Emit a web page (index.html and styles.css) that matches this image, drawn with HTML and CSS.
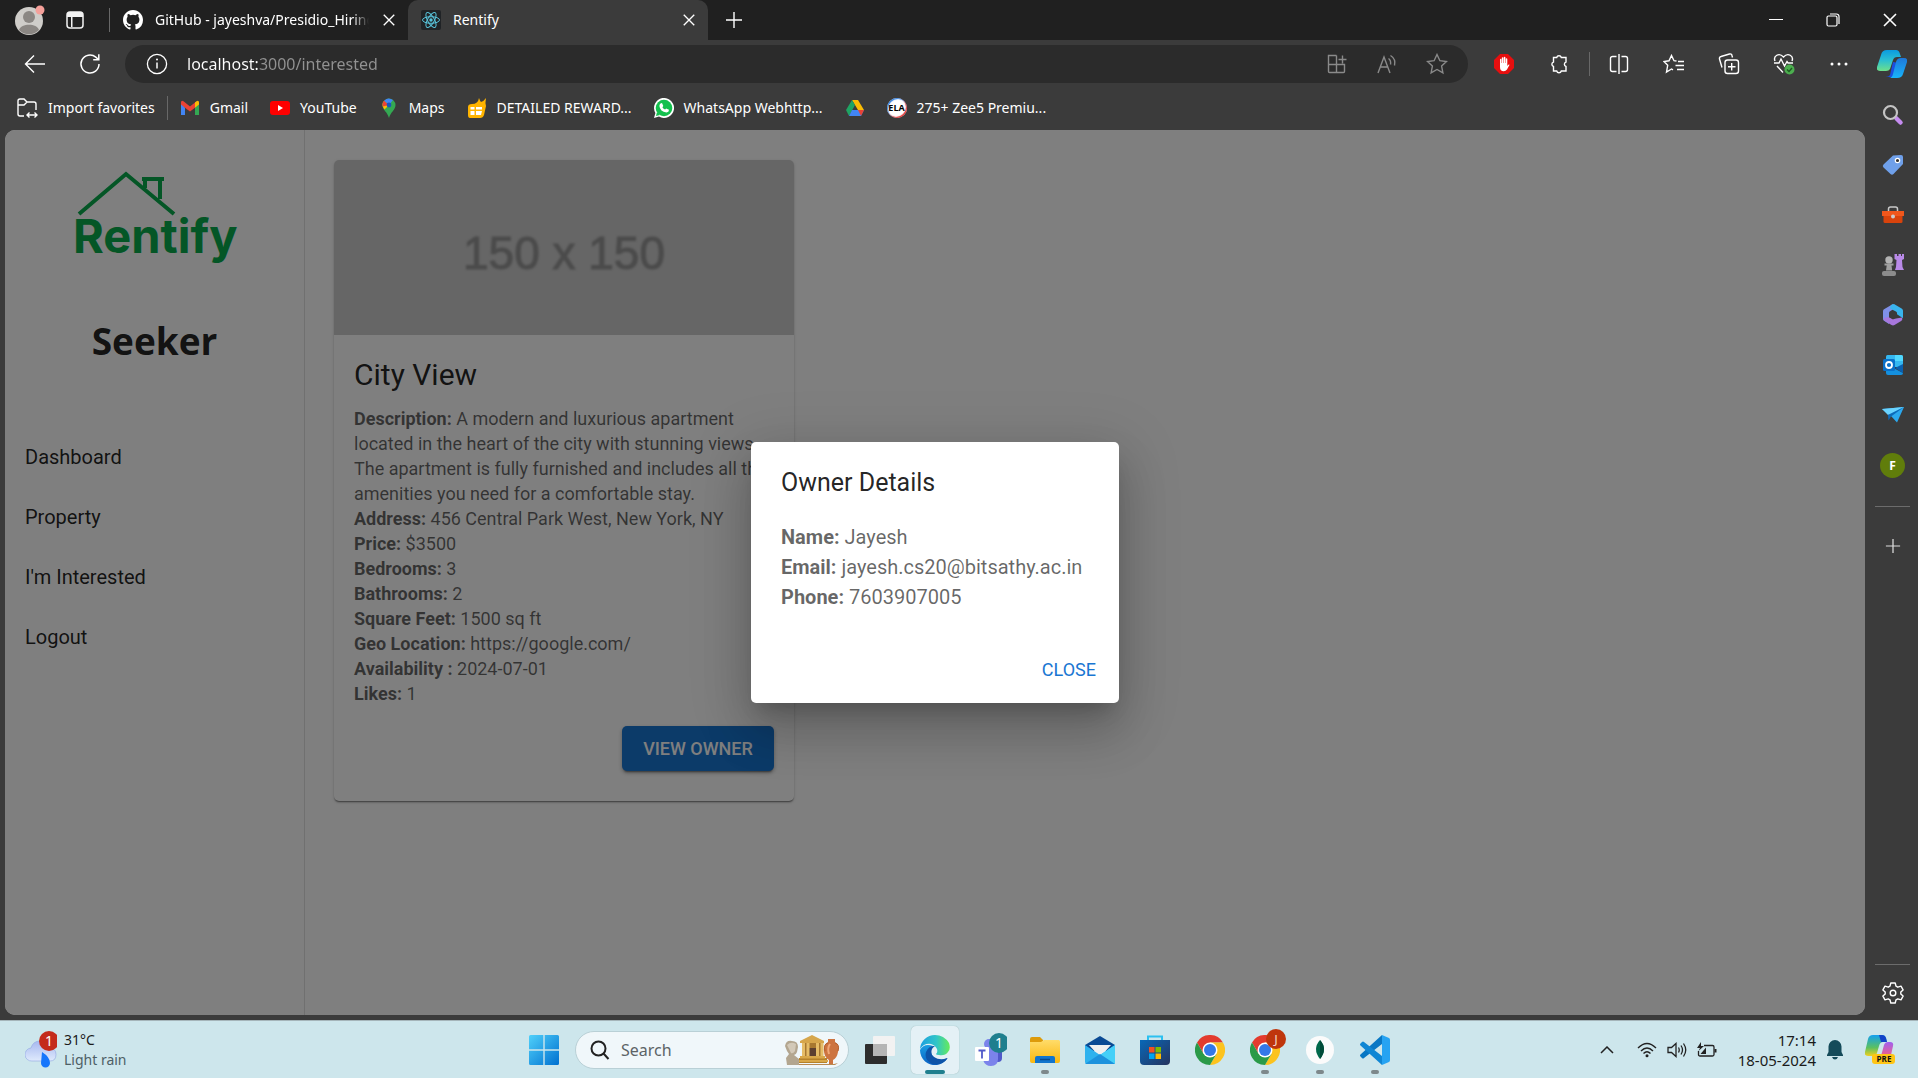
FILE: index.html
```html
<!DOCTYPE html>
<html lang="en">
<head>
<meta charset="utf-8">
<title>Rentify</title>
<link rel="stylesheet" href="styles.css">
</head>
<body>
<svg class="defs" width="0" height="0" aria-hidden="true">
  <defs>
    <linearGradient id="gWin" x1="0" y1="0" x2="1" y2="1"><stop offset="0" stop-color="#4fd0fa"/><stop offset="1" stop-color="#0070d0"/></linearGradient>
    <linearGradient id="gCopA" x1="0" y1="0" x2="0" y2="1"><stop offset="0" stop-color="#0a9be0"/><stop offset=".5" stop-color="#2cc0d0"/><stop offset="1" stop-color="#6ee08a"/></linearGradient>
    <linearGradient id="gCopB" x1="0" y1="0" x2="0" y2="1"><stop offset="0" stop-color="#1f78d8"/><stop offset="1" stop-color="#18b4fb"/></linearGradient>
    <linearGradient id="gEdgeA" x1="0" y1="0" x2="1" y2="0"><stop offset="0" stop-color="#1c9fe0"/><stop offset=".55" stop-color="#30c5c8"/><stop offset="1" stop-color="#66eb5a"/></linearGradient>
    <linearGradient id="gEdgeB" x1="0" y1="0" x2="0" y2="1"><stop offset="0" stop-color="#1b9de2"/><stop offset="1" stop-color="#0a62c4"/></linearGradient>
    <linearGradient id="gFolder" x1="0" y1="0" x2="0" y2="1"><stop offset="0" stop-color="#ffdc6a"/><stop offset="1" stop-color="#fbb80f"/></linearGradient>
    <linearGradient id="gCloud" x1="0" y1="0" x2="0" y2="1"><stop offset="0" stop-color="#a6b8f0"/><stop offset="1" stop-color="#dfeafc"/></linearGradient>
    <linearGradient id="gStore" x1="0" y1="0" x2="1" y2="1"><stop offset="0" stop-color="#0868b8"/><stop offset="1" stop-color="#26345f"/></linearGradient>
    <linearGradient id="gPreA" x1="0" y1="0" x2="0" y2="1"><stop offset="0" stop-color="#12a0f0"/><stop offset=".6" stop-color="#5cc060"/><stop offset="1" stop-color="#f0d020"/></linearGradient>
    <linearGradient id="gPreB" x1="0" y1="0" x2="0" y2="1"><stop offset="0" stop-color="#a060f0"/><stop offset="1" stop-color="#f0608a"/></linearGradient>
    <symbol id="x" viewBox="0 0 12 12"><path d="M1.500 1.500l9 9M10.500 1.500l-9 9" fill="none" stroke="currentColor" stroke-width="1.200"/></symbol>
    <symbol id="plus" viewBox="0 0 18 18"><path d="M9 1v16M1 9h16" fill="none" stroke="currentColor" stroke-width="1.400"/></symbol>
    <symbol id="chrome" viewBox="0 0 30 30">
      <path d="M2 7.500A15 15 0 0 1 28 7.500L15 7.500 8.500 18.750z" fill="#e33b2e"/>
      <path d="M28 7.500A15 15 0 0 1 15 30L21.500 18.750 15 7.500z" fill="#fcc31e"/>
      <path d="M15 30A15 15 0 0 1 2 7.500L8.500 18.750 21.500 18.750z" fill="#2a9a48"/>
      <circle cx="15" cy="15" r="7.500" fill="#fff"/><circle cx="15" cy="15" r="6" fill="#3478e8"/>
    </symbol>
  </defs>
</svg>

<header class="browser">
  <div class="tabs">
    <button class="slot profile" aria-label="Profile">
      <svg width="32" height="30" viewBox="0 0 32 30"><circle cx="15" cy="16" r="14" fill="#cfcdc9"/><circle cx="15" cy="12" r="6" fill="#8b8783"/><path d="M5 25c2-7 18-7 20 0a14 14 0 0 1-20 0z" fill="#8b8783"/><circle cx="26" cy="5" r="4.500" fill="#f5a09a"/></svg>
    </button>
    <button class="slot workspaces" aria-label="Tab actions">
      <svg width="18" height="18" viewBox="0 0 18 18"><rect x="1" y="1" width="16" height="16" rx="3" fill="none" stroke="#f2f2f2" stroke-width="1.500"/><path d="M1 4a3 3 0 0 1 3-3h10a3 3 0 0 1 3 3v2H1zM5 5h1.500v11H5z" fill="#f2f2f2"/></svg>
    </button>
    <span class="vline"></span>
    <div class="tab">
      <svg width="20" height="20" viewBox="0 0 16 16"><path fill="#fff" d="M8 0C3.580 0 0 3.580 0 8c0 3.540 2.290 6.530 5.470 7.590.4.070.55-.17.55-.38 0-.19-.01-.82-.01-1.490-2.010.37-2.530-.49-2.690-.94-.09-.23-.48-.94-.82-1.130-.28-.15-.68-.52-.01-.53.63-.01 1.080.58 1.230.82.72 1.210 1.870.87 2.330.66.070-.52.28-.87.51-1.070-1.780-.2-3.640-.89-3.640-3.950 0-.87.31-1.590.82-2.150-.08-.2-.36-1.020.080-2.120 0 0 .67-.21 2.200.82a7.600 7.600 0 0 1 4 0c1.530-1.040 2.200-.82 2.200-.82.44 1.100.16 1.920.080 2.120.51.56.82 1.270.82 2.150 0 3.070-1.870 3.750-3.650 3.950.29.25.54.73.54 1.480 0 1.070-.01 1.930-.01 2.200 0 .21.15.46.55.38A8 8 0 0 0 16 8c0-4.420-3.580-8-8-8z"/></svg>
      <span class="tab-title fade">GitHub - jayeshva/Presidio_Hiring</span>
      <button class="close" aria-label="Close tab"><svg width="14" height="14"><use href="#x"/></svg></button>
    </div>
    <div class="tab active">
      <svg width="20" height="20" viewBox="0 0 20 20"><rect width="20" height="20" rx="2" fill="#202326"/><g fill="none" stroke="#58c4dc"><ellipse cx="10" cy="10" rx="8.500" ry="3.300"/><ellipse cx="10" cy="10" rx="8.500" ry="3.300" transform="rotate(60 10 10)"/><ellipse cx="10" cy="10" rx="8.500" ry="3.300" transform="rotate(120 10 10)"/></g><circle cx="10" cy="10" r="1.700" fill="#58c4dc"/></svg>
      <span class="tab-title">Rentify</span>
      <button class="close" aria-label="Close tab"><svg width="14" height="14"><use href="#x"/></svg></button>
    </div>
    <button class="slot newtab" aria-label="New tab"><svg width="18" height="18"><use href="#plus"/></svg></button>
    <div class="window-controls">
      <button aria-label="Minimize"><svg width="14" height="14" viewBox="0 0 14 14"><path d="M0 6.500h14" stroke="#fff"/></svg></button>
      <button aria-label="Restore"><svg width="14" height="14" viewBox="0 0 14 14" fill="none" stroke="#fff" stroke-width="1.200"><rect x="1" y="3" width="10" height="10" rx="1.500"/><path d="M4 1h6.500A2.500 2.500 0 0 1 13 3.500V11"/></svg></button>
      <button aria-label="Close window"><svg width="16" height="16"><use href="#x"/></svg></button>
    </div>
  </div>

  <div class="toolbar">
    <button class="slot" aria-label="Back"><svg width="22" height="20" viewBox="0 0 22 20" fill="none" stroke="#fff" stroke-width="1.400"><path d="M21 10H1.500M10 1.500L1.500 10l8.500 8.500"/></svg></button>
    <button class="slot reload" aria-label="Refresh"><svg width="22" height="22" viewBox="0 0 22 22" fill="none" stroke="#fff" stroke-width="1.500"><path d="M20 11a9 9 0 1 1-3.200-6.900L19.500 6.500M19.800 1.200v5.600h-5.600"/></svg></button>
    <div class="address">
      <svg width="22" height="22" viewBox="0 0 22 22"><circle cx="11" cy="11" r="9.600" fill="none" stroke="#fff" stroke-width="1.300"/><path d="M11 9.500v6" stroke="#fff" stroke-width="1.500"/><circle cx="11" cy="6.500" r="1" fill="#fff"/></svg>
      <input class="url" type="text" aria-label="Address" value="localhost:3000/interested">
      <button class="page-action" aria-label="Apps"><svg width="20" height="20" viewBox="0 0 20 20"><path d="M9.500 1.500h-8v16a1 1 0 0 0 1 1h14a1 1 0 0 0 1-1v-7h-16M9.500 1.500v17M11.500 5.500h8M15.500 1.500v8"/></svg></button>
      <button class="page-action" aria-label="Read aloud"><svg width="20" height="20" viewBox="0 0 20 20"><path d="M1 19L7 3l6 16M3.500 13h7M11.500 4.500c2 1.500 2.500 3.500 2 6M13.500 1.500c4 2.500 5 6 4 10"/></svg></button>
      <button class="page-action" aria-label="Add to favorites"><svg width="22" height="22" viewBox="0 0 22 22"><path d="M11 1.500l2.900 6.200 6.600.8-4.900 4.600 1.300 6.700L11 16.500l-5.900 3.300 1.300-6.700L1.500 8.500l6.600-.8z"/></svg></button>
    </div>
    <button class="tool" aria-label="Ad blocker"><svg width="20" height="20" viewBox="0 0 20 20"><path d="M6 0h8l6 6v8l-6 6H6l-6-6V6z" fill="#e60f0f"/><path d="M6 9V5.500q0-.8.700-.8t.7.800V9h.4V4q0-.8.800-.8t.8.800v5h.4V3.500q0-.8.800-.8t.8.800V9h.4V5q0-.8.700-.8t.8.800v7l1-1.200q.7-.6 1.300 0L13 15.500q-1.300 1.800-3.200 1.800Q6 17.300 6 13z" fill="#fff"/></svg></button>
    <button class="tool" aria-label="Extensions"><svg class="line" width="20" height="20" viewBox="0 0 20 20"><path d="M4.500 3.500h3.200a2.400 2.400 0 0 1 4.600 0H17v4.600a2.300 2.300 0 0 0 0 4.400V17h-4.700a2.400 2.400 0 0 1-4.600 0H4.500v-4.500a2.300 2.300 0 0 1 0-4.400z"/></svg></button>
    <span class="vline"></span>
    <button class="tool" aria-label="Split screen"><svg class="line" width="20" height="20" viewBox="0 0 20 20"><path d="M7.500 2.500h-4a2 2 0 0 0-2 2v11a2 2 0 0 0 2 2h4M12.500 2.500h4a2 2 0 0 1 2 2v11a2 2 0 0 1-2 2h-4M10 0v20"/></svg></button>
    <button class="tool" aria-label="Favorites"><svg class="line" width="22" height="20" viewBox="0 0 22 20"><path d="M13.500 7l-2.500-.3L8.500 1.500 6 6.800l-5 .8 3.700 3.700L3.500 18l5-3 1.500.8M15 7.500h6M12.500 11.500H21M14 15.500h7"/></svg></button>
    <button class="tool" aria-label="Collections"><svg class="line" width="22" height="22" viewBox="0 0 22 22"><path d="M4 14.500L1.500 6A2 2 0 0 1 3 3.500L11.500 1A2 2 0 0 1 14 2.500l.5 2"/><rect x="7" y="7" width="13.500" height="13.500" rx="2.500"/><path d="M13.700 10v7.500M10 13.700h7.500"/></svg></button>
    <button class="tool" aria-label="Browser essentials"><svg class="line" width="22" height="22" viewBox="0 0 22 22"><path d="M2 8C0 3 6-1 10.500 4 15-1 21 3 19 8M1 10h5l2-4 3.500 7L14 8.500l1 1.500h5M4 13l6 6.500"/><circle cx="16.500" cy="16.500" r="5" fill="#4cae4f" stroke="none"/><path d="M14 16.500l2 2 3-3.500" stroke="#1d5c20"/></svg></button>
    <button class="tool" aria-label="Settings and more"><svg width="18" height="6" viewBox="0 0 18 6" fill="#fff"><circle cx="2" cy="3" r="1.500"/><circle cx="9" cy="3" r="1.500"/><circle cx="16" cy="3" r="1.500"/></svg></button>
    <button class="copilot" aria-label="Copilot"><svg width="30" height="28" viewBox="0 0 30 28"><path d="M8 26q3 2 5-1l3-13 6 1-3 12q-1 2-3 2H10z" fill="#1a4fe0"/><path d="M10 0h9q3 0 4 4l1 3h-4q-3 0-4 3l-3 9q-1 2-4 2H3q-4 0-3-4L4 5q1-5 6-5z" fill="url(#gCopA)"/><path d="M20 28h-8q3 0 4-4l3-12q1-4 5-4h3q4 0 3 4l-4 12q-1 4-6 4z" fill="url(#gCopB)"/></svg></button>
  </div>

  <nav class="bookmarks" aria-label="Favorites bar">
    <a href="#"><svg class="line" width="22" height="22" viewBox="0 0 22 22"><path d="M8 19H4a2 2 0 0 1-2-2V4a2 2 0 0 1 2-2h4l3 3h7a2 2 0 0 1 2 2v6M2 8h6l3-3M11 18h10M13.500 15.500L11 18l2.500 2.500M18.500 15.500L21 18l-2.500 2.500"/></svg>Import favorites</a>
    <span class="vline"></span>
    <a href="#"><svg width="20" height="20" viewBox="0 0 20 20"><path d="M1 4.500V17h4V9.500z" fill="#4285f4"/><path d="M19 4.500V17h-4V9.500z" fill="#34a853"/><path d="M1 4.500Q1 2 3.500 3.200L10 8.500l6.500-5.300L15 9.800 10 13.500 5 9.800 1 6.500z" fill="#ea4335"/><path d="M15 4.400l1.500-1.200Q19 2 19 4.500v2l-4 3.300z" fill="#fbbc04"/></svg>Gmail</a>
    <a href="#"><svg width="20" height="20" viewBox="0 0 20 20"><rect y="3" width="20" height="14" rx="3" fill="#f00"/><path d="M8 7l5 3-5 3z" fill="#fff"/></svg>YouTube</a>
    <a href="#"><svg width="20" height="20" viewBox="0 0 20 20"><path d="M3.500 7a6.500 6.500 0 0 1 13 0c0 5-5 7-6.500 13C8.500 14 3.500 12 3.500 7z" fill="#34a853"/><path d="M10 7L5.500 11.500Q3.500 9 3.500 7 3.500 4 5.200 2.700z" fill="#fbbc04"/><path d="M10 7L3.700 8.500Q3 4.500 5.200 2.700z" fill="#ea4335"/><path d="M10 7L5.200 2.700Q9-1.500 14 2z" fill="#4285f4"/><circle cx="10" cy="7" r="2.400" fill="#1a56b8"/></svg>Maps</a>
    <a href="#"><svg width="20" height="20" viewBox="0 0 20 20"><path d="M1 9q0-3 4-3 6 0 7-6 1 3 2 4 3-1 5-4-1 5 0 8l-2 9q-1 3-4 3H3q-2 0-2-3z" fill="#ffb400"/><path d="M3.500 9h4v2.500h-4zM9 9h6v2.500H9zM3.500 13h4v4h-4zM9 13h6l-1 4H9z" fill="#fff"/></svg>DETAILED REWARD...</a>
    <a href="#"><svg width="20" height="20" viewBox="0 0 20 20"><path d="M0 20l1.400-5A10 10 0 1 1 5 18.600z" fill="#fff"/><circle cx="10" cy="10" r="8.300" fill="#13c04d"/><path d="M2 18l1-4 3 3z" fill="#13c04d"/><path d="M6.500 5.500l1.500-.5 1.300 3-.9 1.200q1 1.800 2.700 2.400l1-1.200 2.900 1.400q0 2.500-2.500 2.700Q6 13.500 5.400 8 5.500 6.300 6.500 5.500z" fill="#fff"/></svg>WhatsApp Webhttp...</a>
    <a href="#" aria-label="Drive"><svg width="20" height="20" viewBox="0 0 20 20"><path d="M7 2h6l6 10h-6z" fill="#fbbc04"/><path d="M7 2l3 5-6 11-3-6z" fill="#1fa463"/><path d="M7 12h12l-3 6H4z" fill="#4285f4"/><path d="M16 12h3l-3 6-3-6z" fill="#ea4335"/></svg></a>
    <a href="#"><span class="ela">ELA</span>275+ Zee5 Premiu...</a>
  </nav>
</header>

<div class="workspace">
  <div class="page">
    <aside class="drawer">
      <svg class="logo" width="170" height="104" viewBox="0 0 170 104"><g fill="none" stroke="#08ac4c" stroke-width="4"><path d="M6 48L53 8l48 40M72 22V12M87 33V12"/><path d="M69 13h22" stroke-width="4"/></g><text x="0" y="87" font-family="Inter, sans-serif" font-weight="700" font-size="47" fill="#08ac4c">Rentify</text></svg>
      <h1>Seeker</h1>
      <nav class="menu">
        <a href="#">Dashboard</a>
        <a href="#">Property</a>
        <a href="#">I'm Interested</a>
        <a href="#">Logout</a>
      </nav>
    </aside>
    <main>
      <article class="card">
        <div class="thumb"><span>150 x 150</span></div>
        <div class="card-body">
          <h2>City View</h2>
          <p><b>Description:</b> A modern and luxurious apartment located in the heart of the city with stunning views. The apartment is fully furnished and includes all the amenities you need for a comfortable stay.</p>
          <p><b>Address:</b> 456 Central Park West, New York, NY</p>
          <p><b>Price:</b> $3500</p>
          <p><b>Bedrooms:</b> 3</p>
          <p><b>Bathrooms:</b> 2</p>
          <p><b>Square Feet:</b> 1500 sq ft</p>
          <p><b>Geo Location:</b> https://google.com/</p>
          <p><b>Availability :</b> 2024-07-01</p>
          <p><b>Likes:</b> 1</p>
          <button class="view-owner">VIEW OWNER</button>
        </div>
      </article>
    </main>
    <div class="backdrop">
      <section class="dialog" role="dialog" aria-labelledby="owner-title">
        <h2 id="owner-title">Owner Details</h2>
        <div class="dialog-body">
          <p><b>Name:</b> Jayesh</p>
          <p><b>Email:</b> jayesh.cs20@bitsathy.ac.in</p>
          <p><b>Phone:</b> 7603907005</p>
        </div>
        <div class="dialog-actions"><button>CLOSE</button></div>
      </section>
    </div>
  </div>

  <aside class="edgebar">
    <button aria-label="Search"><svg width="22" height="22" viewBox="0 0 22 22"><path d="M14.500 14.500l4 4" stroke="#c58cf0" stroke-width="4.500" stroke-linecap="round"/><circle cx="8.500" cy="8.500" r="6.500" fill="none" stroke="#c4c4c4" stroke-width="2.200"/></svg></button>
    <button aria-label="Shopping"><svg width="22" height="22" viewBox="0 0 22 22"><path d="M11 1.500L19 1q2 0 2 2v7L11.500 20q-1.500 1.500-3 0L1.500 13.500q-1.500-1.500 0-3z" fill="#6fa0ea"/><circle cx="15.500" cy="6.500" r="2.200" fill="#333" stroke="#fff" stroke-width="1.200"/></svg></button>
    <button aria-label="Tools"><svg width="22" height="18" viewBox="0 0 22 18"><path d="M6.500 5V3q0-2 2-2h5q2 0 2 2v2" fill="none" stroke="#c8c8c8" stroke-width="1.500"/><path d="M0 5h22v5H0z" fill="#f0571c"/><path d="M1.500 10h19v5.500q0 1.500-1.500 1.500H3q-1.500 0-1.500-1.500z" fill="#d8430c"/><circle cx="11" cy="10.500" r="2" fill="#ccc"/></svg></button>
    <button aria-label="Games"><svg width="22" height="22" viewBox="0 0 22 22"><path d="M12.500 0H15v2h1.500V0H19v2h1V0h2v5l-2 1 .5 7 1.500 3h-9l1-3 .5-7-2-1z" fill="#b98ae8"/><circle cx="7" cy="6" r="3.700" fill="#b4b4b4"/><path d="M2.500 9.500h9v2h-2l.7 5H4l.7-5H2.500z" fill="#a0a0a0"/><rect y="17" width="14" height="5" rx="2" fill="#8c8c8c"/></svg></button>
    <button aria-label="Microsoft 365"><svg width="22" height="22" viewBox="0 0 22 22"><path d="M11 0L2 5.200q-1 .6-1 2v7.600q0 1.500 1 2L7 20V9q0-1.500 1.500-2L14 3.500z" fill="#7f90e8"/><path d="M9 1l3-1 8 4.700q1 .8 1 2v7.500l-6-4V9q0-1-1-1.600L8 4.500z" fill="#39b5ee"/><path d="M7 13l4 2 9-1.500q1 2-.5 3.200L12.500 21q-1.500.8-3 0L3 17q-2-1-1-3z" fill="#a777dc"/><path d="M11 7l4 2.300v4L11 15.500l-4-2.200v-4z" fill="#3b3b3b"/></svg></button>
    <button aria-label="Outlook"><svg width="22" height="20" viewBox="0 0 22 20"><path d="M4 1.500Q4 0 5.500 0H19q2 0 2 2v10H4z" fill="#35b8f1"/><path d="M13 0h6q2 0 2 2v4h-8z" fill="#50d9ff"/><path d="M4 9l17 9q0 2-2 2H6q-2 0-2-2z" fill="#1490df"/><path d="M21 9v9L13 13z" fill="#0a5fae"/><rect x="1" y="4" width="12" height="12" rx="1.500" fill="#0a70c8"/><circle cx="7" cy="10" r="3" fill="none" stroke="#fff" stroke-width="1.800"/></svg></button>
    <button aria-label="Drop"><svg width="22" height="16" viewBox="0 0 22 16"><path d="M0 2L22 0 15 15.500 9.500 9.500z" fill="#2ba8ee"/><path d="M0 2L22 0 6 8z" fill="#69d3ff"/><path d="M6 8L22 0 9 9.500 6.500 13.500z" fill="#0d69b8"/></svg></button>
    <button class="contact" aria-label="F contact">F</button>
    <span class="hline"></span>
    <button aria-label="Customize"><svg width="16" height="16"><use href="#plus"/></svg></button>
    <span class="hline last"></span>
    <button class="gear" aria-label="Settings"><svg class="line" width="22" height="22" viewBox="0 0 22 22"><path d="M8.800 1h4.400l.8 3.200 1.800 1 3.200-1 2.100 3.700L18.800 10v2l2.300 2.100L19 17.800l-3.200-.9-1.800 1-.8 3.100H8.800L8 17.900l-1.800-1-3.200.9-2.100-3.700L3.200 12v-2L.9 7.900 3 4.200l3.200 1 1.800-1z" stroke-linejoin="round"/><circle cx="11" cy="11" r="2.800"/></svg></button>
  </aside>
</div>

<footer class="taskbar">
  <button class="weather">
    <svg width="32" height="38" viewBox="0 0 32 38"><path d="M7 30a6.500 6.500 0 0 1-1-13Q8 10 15 10t9 7q7 0 7 6.500T25 30z" fill="url(#gCloud)" stroke="#91a6e2" stroke-width=".6"/><path d="M17 21q8 5 8 11a4.500 4.500 0 0 1-9 0z" fill="#1676fb"/><circle cx="24" cy="10" r="10" fill="#c42b1c"/><text x="24" y="15" text-anchor="middle" font-family="Noto Sans, sans-serif" font-size="14" fill="#fff">1</text></svg>
    <span><span class="temp">31°C</span><span class="cond">Light rain</span></span>
  </button>

  <div class="apps">
    <button class="app" aria-label="Start"><svg width="30" height="30" viewBox="0 0 30 30" fill="url(#gWin)"><path d="M0 1.500Q0 0 1.500 0H14.300v14.300H0zM15.700 0H28.500Q30 0 30 1.500v12.800H15.700zM0 15.700h14.300V30H1.500Q0 30 0 28.500zM15.700 15.700H30v12.800q0 1.500-1.500 1.500H15.700z"/></svg></button>
    <label class="search">
      <svg width="20" height="20" viewBox="0 0 20 20" fill="none" stroke="#222" stroke-width="2"><circle cx="8.500" cy="8.500" r="7"/><path d="M13.500 13.500l5 5.500"/></svg>
      <input type="text" placeholder="Search" aria-label="Search">
      <svg width="56" height="32" viewBox="0 0 56 32"><path d="M4 30h46l4-1-3 2H12z" fill="#b98a52"/><path d="M15 24h28v5H15z" fill="#b5822b"/><path d="M18 9h21v15H18z" fill="#a87830"/><path d="M25 14h7v9h-7z" fill="#5d4030"/><path d="M16 7L28 1l12 6v2H16z" fill="#d6a64c"/><path d="M18 9h3v13h-3zM22.500 9h3v13h-3zM32 9h3v13h-3zM36.500 9h3v13h-3z" fill="#e6bd68"/><path d="M16 22h25v2.500H16zM14 26h30v2H14z" fill="#d9a84a"/><path d="M1 12Q2 6 8 7q6 0 6 6l-1 5q-1 3-3 3l5 4v6H3l-1-7 3-4-2-3z" fill="#b3a690"/><path d="M3 11q4-4 9-1l-1 7q-2 3-4 2z" fill="#d3c9b8"/><path d="M44 5h7v3q5 3 3 10-1 6-5 8v4h-4v-4q-4-2-5-8-1-7 4-10z" fill="#cd7440"/><path d="M44 9q-5 1-3 8M51 9q5 1 3 8" stroke="#b35f2e" fill="none"/><path d="M46 10q-3 4-1 10" stroke="#f0a878" stroke-width="2" fill="none"/></svg>
    </label>
    <button class="app" aria-label="Task view"><svg width="30" height="28" viewBox="0 0 30 28"><rect y="8" width="22" height="20" rx="1" fill="#2d2d2d"/><rect x="8" width="22" height="20" rx="1" fill="#f2f2f2"/><path d="M8 8h14v12H8z" fill="#b5b5b5"/></svg></button>
    <button class="app current" aria-label="Edge"><svg width="30" height="30" viewBox="0 0 30 30"><path d="M0 15A15 15 0 0 0 17 30q6-1 10-6-2 1-5 1-7 0-10-5-3-5 1-9Q4 8 0 15z" fill="url(#gEdgeB)"/><path d="M12 20q-2-6 3-9-6-1-9 6-2 8 6 12 10 2 15-5 1-1 0-1-7 3-13-1-1-1-2-2z" fill="#0e54a8"/><path d="M0 14A15 15 0 0 1 15 0q9 0 14 8 2 6-1 9-3 4-9 3-3 0-3-1 2-2 1-5-2-4-6-5Q4 8 0 14z" fill="url(#gEdgeA)"/></svg></button>
    <button class="app" aria-label="Teams"><svg width="34" height="34" viewBox="0 0 34 34"><rect x="19" y="11" width="10" height="18" rx="4" fill="#5059c9"/><circle cx="16" cy="11" r="5" fill="#7b83eb"/><path d="M10 14h15v12q0 7-7 7-6 0-8-6z" fill="#7b83eb"/><rect x="2" y="14" width="14" height="14" rx="1" fill="#fff"/><path d="M5.500 17.500h7M9 17.500v8" stroke="#5059c9" stroke-width="1.800"/><circle cx="26" cy="10" r="10" fill="#1f7f8e"/><text x="26" y="15" text-anchor="middle" font-family="Noto Sans, sans-serif" font-size="14" fill="#fff">1</text></svg></button>
    <button class="app open" aria-label="File Explorer"><svg width="30" height="28" viewBox="0 0 30 28"><path d="M0 3q0-2 2-2h8l3 3v6H0z" fill="#dd9b0b"/><path d="M0 6h11l3-2h15l1 1v20q0 2-2 2H2q-2 0-2-2z" fill="url(#gFolder)"/><path d="M5 27v-5q0-2 2-2h16q2 0 2 2v5z" fill="#1275cd"/><path d="M10 23.500h10" stroke="#08498d" stroke-width="1.500"/></svg></button>
    <button class="app" aria-label="Mail"><svg width="30" height="28" viewBox="0 0 30 28"><path d="M0 9L15 0l15 9v6H0z" fill="#0a4a94"/><path d="M4 9h22l-9 10h-4z" fill="#f0f0f0"/><path d="M0 9l15 10L30 9v17q0 2-2 2H2q-2 0-2-2z" fill="#2fb2ee"/><path d="M15 19L30 9v19z" fill="#45d0f8"/><path d="M0 28l15-10 15 10z" fill="#1d92dd"/></svg></button>
    <button class="app" aria-label="Microsoft Store"><svg width="30" height="30" viewBox="0 0 30 30"><path d="M8 6V1.500h14V6" fill="none" stroke="#2cc0f0" stroke-width="2"/><path d="M0 5h30v21q0 4-4 4H4q-4 0-4-4z" fill="url(#gStore)"/><path d="M9 12h5.500v5.500H9z" fill="#f25022"/><path d="M15.500 12H21v5.500h-5.500z" fill="#7fba00"/><path d="M9 18.500h5.500V24H9z" fill="#00a4ef"/><path d="M15.500 18.500H21V24h-5.500z" fill="#ffb900"/></svg></button>
    <button class="app" aria-label="Chrome"><svg width="30" height="30"><use href="#chrome"/></svg></button>
    <button class="app open" aria-label="Chrome, profile J"><svg width="42" height="42" viewBox="0 0 42 42"><use href="#chrome" x="6" y="6" width="30" height="30"/><circle cx="32" cy="10" r="10" fill="#bf360c"/><text x="32" y="15" text-anchor="middle" font-family="Noto Sans, sans-serif" font-size="13" fill="#f3d5c8">J</text></svg></button>
    <button class="app open" aria-label="MongoDB Compass"><svg width="30" height="30" viewBox="0 0 30 30"><circle cx="15" cy="15" r="14" fill="#fbfbfb"/><path d="M15 5q8 9 0 19-8-10 0-19z" fill="#00684a"/><path d="M15 5q8 9 0 19z" fill="#004a38"/></svg></button>
    <button class="app open" aria-label="Visual Studio Code"><svg width="30" height="30" viewBox="0 0 30 30"><path d="M22 0v9L4 23q-1 1-2 0L.5 21.500q-1-1 0-2z" fill="#0877c4"/><path d="M22 30v-9L4 7Q3 6 2 7L.5 8.500q-1 1 0 2z" fill="#0f86d4"/><path d="M22 0l7 3q1 .5 1 2v20q0 1.500-1 2l-7 3z" fill="#26a3f2"/></svg></button>
  </div>

  <div class="tray">
    <button class="chevron" aria-label="Show hidden icons"><svg width="14" height="8" viewBox="0 0 14 8"><path d="M1 7l6-6 6 6" fill="none" stroke="#222" stroke-width="1.500"/></svg></button>
    <button class="status" aria-label="Network, volume and battery">
      <svg width="20" height="16" viewBox="0 0 20 16" fill="none" stroke="#222" stroke-width="1.400"><path d="M1 6q9-9 18 0M4 9q6-6 12 0M6.500 11.500q3.500-3.500 7 0"/><circle cx="10" cy="13.800" r="1.500" fill="#222" stroke="none"/></svg>
      <svg width="20" height="16" viewBox="0 0 20 16" fill="none" stroke="#222" stroke-width="1.300"><path d="M1 5.500h3.500L9 1.500v13l-4.500-4H1zM11.500 5.500q1.500 2.500 0 5M14 3.500q3 4.500 0 9M16.500 1.500q4.500 6.500 0 13"/></svg>
      <svg width="20" height="16" viewBox="0 0 20 16"><path d="M7 3.500h8.500q1.500 0 1.500 1.500v7.500q0 1.500-1.500 1.500H3q-1.500 0-1.500-1.500V9" fill="none" stroke="#222" stroke-width="1.300"/><path d="M17.500 7h2v3.500h-2zM3.500 12L9 5.500V12zM4 0L0 6h3L1.500 9 7 4H4z" fill="#222"/></svg>
    </button>
    <button class="clock"><span>17:14</span><span>18-05-2024</span></button>
    <button class="bell" aria-label="Notifications"><svg width="18" height="20" viewBox="0 0 18 20"><path d="M9 0a6.500 6.500 0 0 1 6.500 6.500V12l1.500 3v1H1v-1l1.500-3V6.500A6.500 6.500 0 0 1 9 0zM6 17h6q-1 2.500-3 2.500T6 17z" fill="#154b5a"/></svg></button>
    <button class="pre" aria-label="Copilot preview"><svg width="30" height="30" viewBox="0 0 30 30"><path d="M8 0h9q3 0 4 3l1 4h-4q-3 0-4 4l-2 7q-1 3-4 3H3q-4 0-3-4L3 4q1-4 5-4z" fill="url(#gPreA)"/><path d="M14 0h3q3 0 4 3l1 4h-6z" fill="#1243c8"/><path d="M16 21l3-11q1-3 4-3h2q4 0 3 4l-2 9z" fill="url(#gPreB)"/><rect x="7" y="19" width="23" height="10" rx="3" fill="#ffc515"/><text x="19" y="27" text-anchor="middle" font-family="Open Sans, sans-serif" font-weight="700" font-size="8" fill="#111">PRE</text></svg></button>
  </div>
</footer>
</body>
</html>
```
FILE: styles.css
```css
* { box-sizing: border-box; }

body {
  margin: 0;
  min-height: 100vh;
  display: flex;
  flex-direction: column;
  background: #3b3b3b;
  color: #fff;
  font: 14px/20px "Noto Sans", sans-serif;
}

button {
  display: flex;
  align-items: center;
  justify-content: center;
  padding: 0;
  border: 0;
  background: none;
  color: inherit;
  font: inherit;
}

input {
  min-width: 0;
  padding: 0;
  border: 0;
  outline: 0;
  background: none;
  font: inherit;
}

a { color: inherit; text-decoration: none; }
h1, h2, p { margin: 0; }
svg { flex: none; display: block; }
.defs { position: absolute; }
.line { fill: none; stroke: #fff; stroke-width: 1.4; }
.vline { width: 1px; height: 24px; background: #686868; }

/* Tab strip */
.tabs {
  display: flex;
  align-items: center;
  height: 40px;
  background: #202020;
}
.slot { width: 36px; height: 36px; }
.profile { margin-left: 12px; }
.workspaces { margin: 0 16px 0 9px; }
.tab {
  display: flex;
  align-items: center;
  gap: 12px;
  width: 298px;
  height: 40px;
  padding: 0 11px 0 13px;
}
.tab.active {
  width: 300px;
  border-radius: 10px 10px 0 0;
  background: #3b3b3b;
}
.tab-title {
  flex: 1;
  overflow: hidden;
  white-space: nowrap;
}
.fade { mask-image: linear-gradient(90deg, #000 92%, transparent); }
.close { width: 16px; height: 16px; }
.newtab { margin-left: 8px; }
.window-controls {
  display: flex;
  margin-left: auto;
}
.window-controls button { width: 57px; height: 40px; }

/* Toolbar */
.toolbar {
  display: flex;
  align-items: center;
  height: 48px;
  padding-left: 17px;
}
.reload { margin: 0 17px 0 19px; }
.toolbar .vline { margin: 0 1px 0 3px; }
.address {
  flex: 1;
  display: flex;
  align-items: center;
  height: 38px;
  margin-right: 8px;
  padding: 0 6px 0 21px;
  border-radius: 19px;
  background: #2b2b2b;
}
.url {
  flex: 1;
  margin-left: 19px;
  font-size: 16px;
  line-height: 24px;
  color: transparent;
  background: linear-gradient(90deg, #fff 72px, #929292 72px);
  background-clip: text;
  -webkit-background-clip: text;
}
.page-action { width: 50px; height: 36px; }
.page-action svg { fill: none; stroke: #8a8a8a; stroke-width: 1.4; }
.tool { width: 55px; height: 36px; }
.copilot { width: 52px; height: 36px; }

/* Favorites bar */
.bookmarks {
  display: flex;
  align-items: center;
  gap: 22px;
  height: 42px;
  padding: 0 0 2px 16px;
}
.bookmarks a {
  display: flex;
  align-items: center;
  gap: 10px;
  white-space: nowrap;
}
.bookmarks .vline { margin: 0 -10px; }
.ela {
  width: 20px;
  border-radius: 50%;
  background: #fff;
  box-shadow: inset 1px 1px 1px #2b7de0, inset -1px -1px 1px #e33030;
  color: #000;
  font: 700 9px/20px "Open Sans", sans-serif;
  text-align: center;
}

/* Page viewport and side rail */
.workspace {
  flex: 1;
  display: flex;
}
.page {
  position: relative;
  flex: 1;
  display: flex;
  margin: 0 0 5px 5px;
  border-radius: 10px;
  overflow: hidden;
  background: #fff;
  color: rgba(0, 0, 0, .87);
  font-family: Roboto, sans-serif;
}
.drawer {
  width: 300px;
  border-right: 1px solid rgba(0, 0, 0, .12);
}
.logo { margin: 36px 0 0 68px; }
.drawer h1 {
  margin: 41px 0 56px;
  font: 700 37px/60px "Open Sans", sans-serif;
  text-align: center;
}
.menu a {
  display: block;
  padding: 15px 20px;
  font-size: 20px;
  line-height: 30px;
}
main { padding: 30px 29px; }
.card {
  width: 460px;
  border-radius: 5px;
  overflow: hidden;
  box-shadow: 0 2px 2px -1px rgba(0, 0, 0, .4), 0 1px 1px rgba(0, 0, 0, .14), 0 1px 4px rgba(0, 0, 0, .12);
}
.thumb {
  display: flex;
  align-items: center;
  justify-content: center;
  height: 175px;
  padding-top: 10px;
  background: #ccc;
  color: #969696;
  font: 46px/60px "Liberation Sans", Arial, sans-serif;
  -webkit-text-stroke: 1px #969696;
}
.thumb span { filter: blur(1px); }
.card-body { padding: 20px 20px 30px; }
.card h2 {
  margin-bottom: 11px;
  font-size: 30px;
  font-weight: 400;
  line-height: 40px;
}
.card p {
  color: rgba(0, 0, 0, .6);
  font-size: 18px;
  line-height: 25px;
}
.view-owner {
  min-width: 152px;
  height: 45px;
  margin: 20px 0 0 auto;
  padding: 0 20px;
  border-radius: 5px;
  background: #1976d2;
  box-shadow: 0 3px 2px -2px rgba(0, 0, 0, .4), 0 2px 4px rgba(0, 0, 0, .3);
  color: #fff;
  font-size: 18px;
  font-weight: 500;
}
.backdrop {
  position: absolute;
  inset: 0;
  display: flex;
  align-items: center;
  justify-content: center;
  background: rgba(0, 0, 0, .5);
}
.dialog {
  min-width: 368px;
  border-radius: 5px;
  background: #fff;
  box-shadow: 0 14px 19px -9px rgba(0, 0, 0, .2), 0 30px 48px 4px rgba(0, 0, 0, .14), 0 11px 58px 10px rgba(0, 0, 0, .12);
}
.dialog h2 {
  padding: 21px 30px 19px;
  font-size: 25px;
  font-weight: 400;
  line-height: 40px;
}
.dialog-body {
  padding: 0 30px 25px;
  color: rgba(0, 0, 0, .6);
  font-size: 20px;
  line-height: 30px;
}
.dialog-actions {
  display: flex;
  justify-content: flex-end;
  padding: 10px;
}
.dialog-actions button {
  height: 46px;
  padding: 0 13px;
  color: #1976d2;
  font-size: 18px;
}

.edgebar {
  display: flex;
  flex-direction: column;
  align-items: center;
  width: 53px;
  margin-top: -40px;
  padding: 0 2px 0 4px;
}
.edgebar button { width: 40px; height: 50px; }
.edgebar .contact {
  width: 25px;
  height: 25px;
  margin: 13px 0 28px;
  border-radius: 50%;
  background: #607d0b;
  font-size: 12px;
  font-weight: 700;
}
.hline { width: 35px; height: 1px; background: #6c6c6c; }
.hline + button { margin-top: 14px; color: #ddd; }
.hline.last { margin-top: auto; }
.edgebar .gear { margin: 3px 0 2px; }

/* Windows taskbar */
.taskbar {
  display: grid;
  grid-template-columns: 1fr auto 1fr;
  align-items: center;
  height: 58px;
  border-top: 1px solid #a5b5ba;
  background: #cde6ec;
  color: #1b1b1b;
}
.weather {
  justify-self: start;
  gap: 7px;
  margin-left: 25px;
  text-align: left;
}
.weather span { display: block; }
.cond { color: #4e6066; }
.apps {
  display: flex;
  align-items: center;
  gap: 7px;
  padding-left: 1px;
}
.app {
  position: relative;
  width: 48px;
  height: 48px;
  border-radius: 5px;
}
.current { background: #e4f1f6; box-shadow: 0 0 1px #8aa; }
.current::after, .open::after {
  content: "";
  position: absolute;
  bottom: 0;
  width: 8px;
  height: 4px;
  border-radius: 2px;
  background: #7d888b;
}
.current::after { width: 20px; background: #1f7f8e; }
.search {
  display: flex;
  align-items: center;
  width: 274px;
  height: 38px;
  padding: 0 8px 0 14px;
  border: 1px solid #b9d0d6;
  border-radius: 19px;
  background: #f0f7fa;
}
.search input {
  flex: 1;
  margin-left: 11px;
  font-size: 16px;
}
.search input::placeholder { color: #5c6366; opacity: 1; }
.tray {
  display: flex;
  align-items: center;
  justify-content: flex-end;
  padding-right: 23px;
}
.status { gap: 10px; margin: 0 21px 0 23px; }
.clock {
  flex-direction: column;
  align-items: flex-end;
  font-size: 15px;
}
.bell { margin: 0 21px 0 10px; }
```
